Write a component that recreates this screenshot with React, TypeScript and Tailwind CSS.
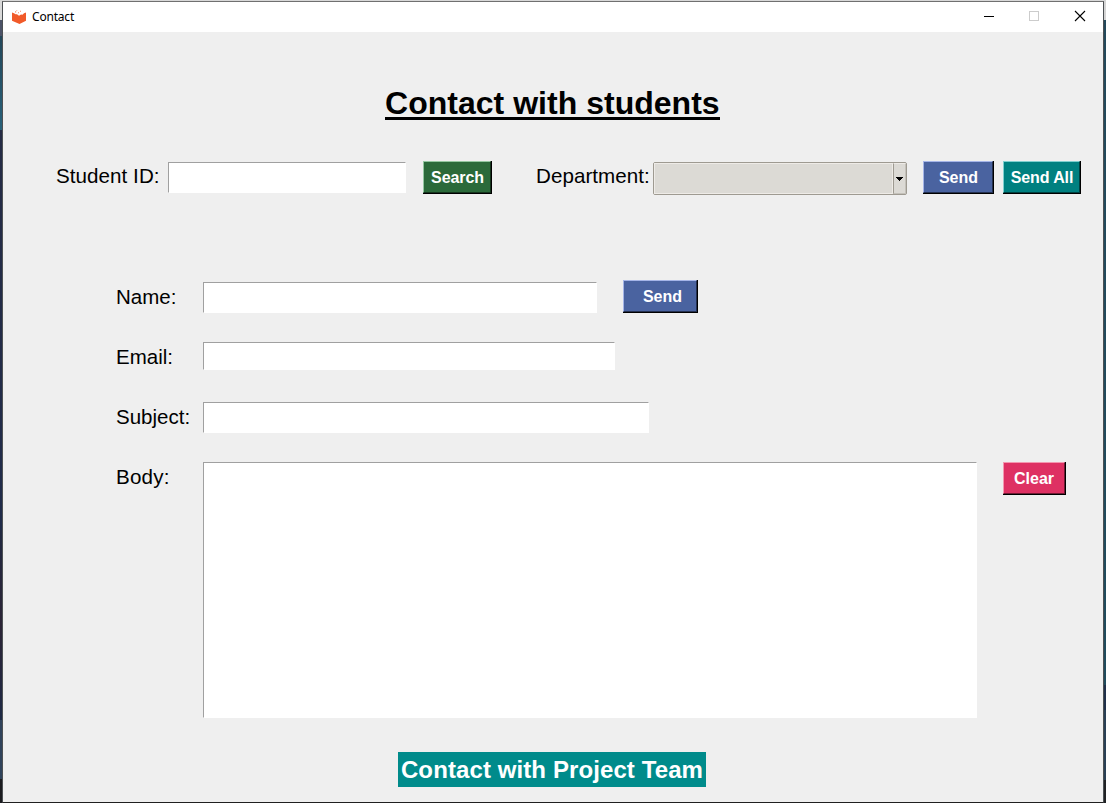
import React from "react";

function Field({ label, top, className, children }: { label: string; top: string; className: string; children?: React.ReactNode }) {
  return (
    <div className={`flex items-start pl-[113px] ${top}`}>
      <label className="w-[87px] shrink-0 whitespace-nowrap pt-[5px] pb-px text-[20.5px] leading-[23px]">{label}</label>
      <input
        aria-label={label}
        className={`shrink-0 border border-t-[#a0a0a0] border-l-[#a0a0a0] border-r-white border-b-white bg-white outline-none ${className}`}
      />
      {children}
    </div>
  );
}

function Button({ children, className }: { children: React.ReactNode; className: string }) {
  return (
    <button className="shrink-0 border-r border-b border-black">
      <span
        className={`flex h-[32px] items-center justify-center whitespace-nowrap border pt-[2px] text-[16px] font-bold leading-[18px] text-white ${className}`}
      >
        {children}
      </span>
    </button>
  );
}

const BLUE = "border-t-[#a5b5e8] border-l-[#a5b5e8] border-r-[#253150] border-b-[#253150] bg-[#4a63a0]";

export default function App() {
  return (
    <div className="flex h-[803px] w-[1106px] overflow-hidden bg-[#d8d8d8] font-['Liberation_Sans',Arial,sans-serif] text-black">
      <div className="flex w-[2px] shrink-0 flex-col">
        <div className="h-[20px] bg-[#d9d9d9]" />
        <div className="h-[16px] bg-[#4c5368]" />
        <div className="h-[94px] bg-gradient-to-b from-[#23475a] to-[#28617a]" />
        <div className="h-[400px] bg-gradient-to-b from-[#252b45] to-[#202b4a]" />
        <div className="h-[190px] bg-gradient-to-b from-[#212941] via-[#2b2436] to-[#1d2945]" />
        <div className="h-[59px] bg-[#30435b]" />
        <div className="flex-1 bg-[#1b1b1f]" />
      </div>
      <div className="flex min-w-0 flex-1 flex-col pt-px">
        <div className="flex h-[802px] flex-col border border-t-[#707070] border-r-[#4c5053] border-b-[#202020] border-l-[#4c5053] bg-[#efefef]">
          <header className="flex h-[30px] shrink-0 items-center bg-white pl-[8px]">
            <svg width="16" height="16" viewBox="0 0 16 16" fill="#f15a29">
              <path d="M1 3.5 3 4.3 4.5 5.3 6 5.2 8 6.8 10 5.4 11.5 5.8 13 4.3 15 3.5v8.2L8.5 15 1 11.7Z" />
              <path d="M4 2.2h1.2v1.2H4zM7 3.2h1v1H7zM5.4 1h.8v.8h-.8zM9 1.8h1v1H9z" opacity=".7" />
            </svg>
            <span className="ml-[5px] font-['Noto_Sans','Open_Sans',sans-serif] text-[12px] leading-[16px] tracking-[-0.2px]">Contact</span>
            <div className="ml-auto flex">
              <svg width="46" height="30" shapeRendering="crispEdges"><path d="M18 14.5h10" stroke="#000" /></svg>
              <svg width="46" height="30" shapeRendering="crispEdges"><path d="M17.5 9.5h9v9h-9z" fill="none" stroke="#ccc" /></svg>
              <svg width="45" height="30"><path d="m17 9 10 10M27 9 17 19" fill="none" stroke="#000" strokeWidth="1.1" /></svg>
            </div>
          </header>

          <main className="flex min-h-0 flex-1 flex-col">
            <h1 className="mt-[52px] ml-[382px] flex h-[36px] w-[335px] flex-col items-start self-start border-b-[3px] border-black">
              <span className="whitespace-nowrap text-[32px] font-bold leading-[38px] tracking-[0.02px]">Contact with students</span>
            </h1>

            <section className="mt-[41px] flex h-[34px] items-start pl-[53px]">
              <label className="w-[112px] shrink-0 whitespace-nowrap pt-[3px] text-[20.6px] leading-[23px] tracking-[0.05px]">Student ID:</label>
              <input
                aria-label="Student ID"
                className="mt-px h-[31px] w-[238px] shrink-0 border border-t-[#a0a0a0] border-l-[#a0a0a0] border-r-white border-b-white bg-white outline-none"
              />
              <div className="ml-[17px] flex">
                <Button className="w-[68px] border-t-[#94c7a1] border-l-[#94c7a1] border-r-[#16351d] border-b-[#16351d] bg-[#2b6a3a] pl-px tracking-[-0.1px]">Search</Button>
              </div>
              <label className="ml-[44px] w-[117px] shrink-0 whitespace-nowrap pt-[3px] text-[20.6px] leading-[23px] tracking-[0.05px]">Department:</label>
              <div className="mt-px flex h-[33px] w-[254px] shrink-0 rounded-[2px] border border-[#9e9a91] bg-[#dcdad5]">
                <div className="flex-1 border border-[#eeebe7]" />
                <div className="flex w-[13px] items-center justify-center border-t border-r border-b border-l border-t-[#eeebe7] border-r-[#c4c1ba] border-b-[#c4c1ba] border-l-[#9e9a91] pr-px">
                  <svg className="shrink-0" width="7" height="4" viewBox="0 0 7 4" shapeRendering="crispEdges"><path d="M0 0h7v1H6v1H5v1H4v1H3V3H2V2H1V1H0z" /></svg>
                </div>
              </div>
              <div className="ml-[16px] flex gap-[9px]">
                <Button className={`w-[70px] pl-px ${BLUE}`}>Send</Button>
                <Button className="w-[77px] border-t-[#80cfcf] border-l-[#80cfcf] border-r-[#004040] border-b-[#004040] bg-[#008080] pl-px tracking-[-0.1px]">Send All</Button>
              </div>
            </section>

            <Field label="Name:" top="mt-[85px]" className="mt-[2px] h-[31px] w-[394px]">
              <div className="ml-[26px] flex">
                <Button className={`w-[74px] pl-[5px] ${BLUE}`}>Send</Button>
              </div>
            </Field>
            <Field label="Email:" top="mt-[27px]" className="mt-[2px] h-[28px] w-[412px]" />
            <Field label="Subject:" top="mt-[30px]" className="mt-[2px] h-[31px] w-[446px]" />

            <section className="mt-[29px] flex h-[256px] shrink-0 items-start pl-[113px]">
              <label className="w-[87px] shrink-0 pt-[3px] text-[20.6px] leading-[23px] tracking-[0.2px]">Body:</label>
              <textarea
                aria-label="Body"
                className="h-[256px] w-[774px] shrink-0 resize-none border border-t-[#a0a0a0] border-l-[#a0a0a0] border-r-white border-b-white bg-white outline-none"
              />
              <div className="ml-[26px] flex">
                <Button className="w-[62px] border-t-[#f498b0] border-l-[#f498b0] border-r-[#701a33] border-b-[#701a33] bg-[#de3163]">Clear</Button>
              </div>
            </section>

            <footer className="mt-[34px] ml-[395px] flex h-[35px] w-[308px] shrink-0 items-center justify-center bg-[#008b8b] text-[24px] font-bold leading-[28px] tracking-[0.1px] text-white">
              <span className="whitespace-nowrap">Contact with Project Team</span>
            </footer>
          </main>
        </div>
      </div>
      <div className="flex w-[2px] shrink-0 flex-col">
        <div className="h-[20px] bg-[#d4d4d4]" />
        <div className="h-[665px] bg-gradient-to-b from-[#24495b] to-[#204b5c]" />
        <div className="h-[25px] bg-[#20304a]" />
        <div className="h-[70px] bg-[#2a4055]" />
        <div className="flex-1 bg-[#202224]" />
      </div>
    </div>
  );
}
